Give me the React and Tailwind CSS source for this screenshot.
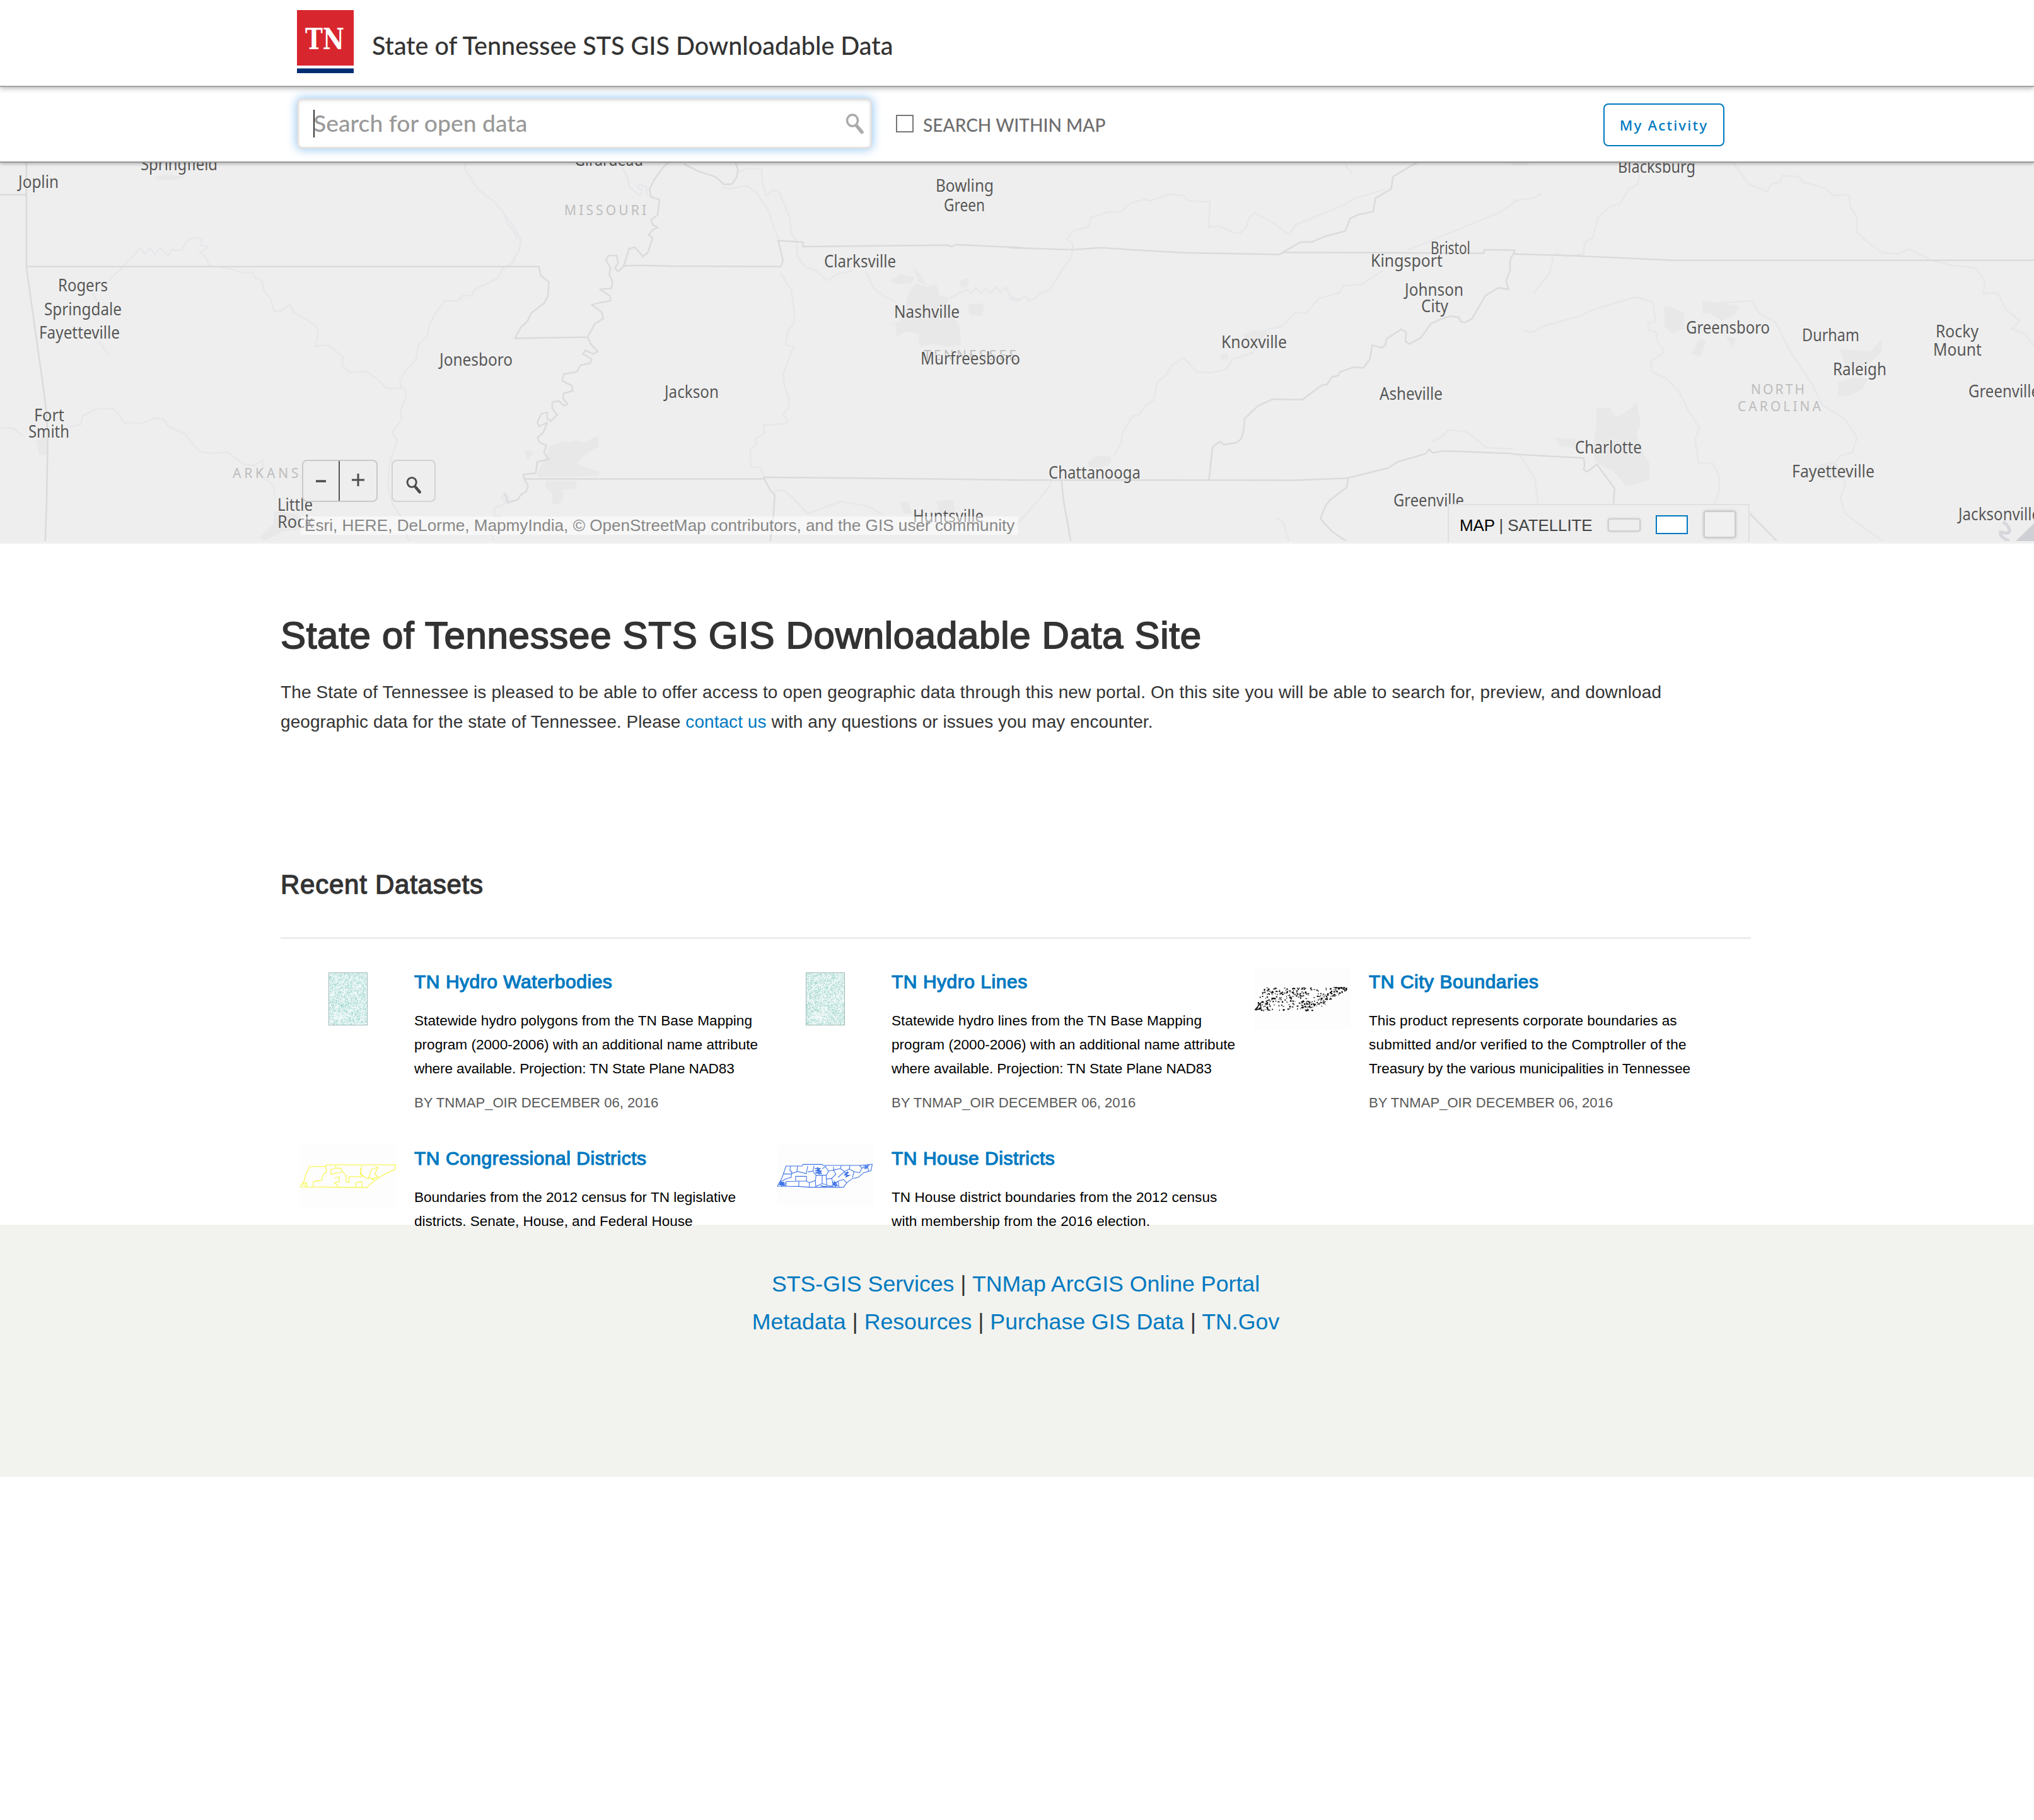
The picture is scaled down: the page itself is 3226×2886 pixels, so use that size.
import React from "react";

// Each tile keeps its own drawing grid; sx scales it to page pixels.
const TILES = [
  {
    x: 0,
    sx: 0.523,
    borders:
      "M80 42L80 455M0 171L80 171M80 455L1568 455M80 455L105 690L128 900L140 1020L145 1130L141 1400L137 1540",
    rivers:
      "M1412 42L1410 72L1450 150L1500 200L1530 250L1540 290L1560 315L1568 350M1568 400L1555 440L1525 460L1510 500L1440 545L1430 570L1405 568L1388 592L1350 588L1320 640L1300 690L1295 730L1268 765L1262 820L1225 875L1212 905L1218 933M370 460L405 412L425 380L440 405L455 380L470 408L485 382L510 410L522 388L548 390L575 345L600 340L612 350L608 370L632 378L605 400L622 415L635 450L700 465L740 480L765 475L775 500L795 510L800 550L820 580L830 630L850 630L880 605L890 635L930 665L960 690L965 720L955 768L995 765L1040 810L1038 845L1060 873L1110 868L1140 895L1172 935L1228 935L1232 970L1215 1020L1218 1060L1188 1110L1205 1140L1195 1180L1185 1215L1175 1310L1190 1390L1220 1450L1240 1540M370 460L330 510M280 560L300 600L285 660M300 750L330 805M0 1092L40 1092L70 1125M210 1088L245 1078L250 1045L290 1018L340 1014L360 1035L375 1070L430 1073L470 1052L495 1058L510 1085L560 1115L605 1185L640 1192L690 1187L740 1235L770 1240L795 1220L800 1245L785 1275L830 1320L835 1370M1568 1375L1540 1390L1520 1370L1530 1350L1545 1370L1520 1400L1500 1405L1500 1440L1520 1440L1490 1500L1497 1535",
    urban:
      "M110 1140L145 1120L145 1195L120 1200ZM830 1420L900 1430L920 1490L860 1500L800 1537L790 1520L830 1470ZM470 100l40 -10l50 10l-20 12l-60 0z",
  },
  {
    x: 800,
    sx: 0.523,
    borders:
      "M0 455L105 455L110 490L135 515L132 570L120 600L80 640L70 670L50 695L32 738L252 733L275 680L300 660L295 635L265 605L290 597L322 590L320 570L290 545L325 540L328 515L318 485L322 460L308 430L315 412L340 410L345 440L335 460L345 475L362 452L378 385L395 378L420 415L435 400L450 340L437 330L450 310L465 300L450 290L445 270L465 250L470 190L445 180L440 150L455 110L480 65L500 42M545 50L590 80L640 100L665 130L690 130L705 100L708 70L700 42M362 452L420 450L500 453L838 455L845 430L830 352L905 358L905 376L1345 370L1355 376L1370 368L1568 380M252 733L262 760L283 790L270 800L245 785L238 800L265 820L260 835L230 845L220 870L180 880L175 905L205 925L207 945L180 955L178 975L192 998L180 1003L165 985L145 990L145 1015L160 1040L140 1065L130 1055L130 1030L112 1035L100 1070L105 1085L130 1070L118 1110L100 1130L108 1150L128 1160L120 1190L135 1215L100 1225L95 1270L58 1275L60 1293L785 1293M785 1286L1568 1297M785 1286L805 1335L820 1355L815 1450L806 1540M60 1293L72 1320L65 1345L50 1355L40 1375L10 1385L0 1350",
    rivers:
      "M350 42L372 100L378 140L412 175L418 155L405 145L408 130L430 140L432 170L455 185M708 85L730 68L780 70L782 120L795 175L815 150L835 165L865 260L870 320L885 355L890 420L915 460L940 465L978 510L1010 485L1055 472M1095 475L1120 540L1150 570L1185 595M660 140L680 148L735 135L765 165L800 230L815 290L830 345M838 480L870 550L880 640L878 680L860 705L853 765L878 770L865 810L845 880L850 930L865 985L862 1015L845 1040L858 1060L855 1075L785 1080L790 1110L762 1135L765 1155L745 1180L748 1245L775 1248L790 1286M820 1335L850 1340L880 1375L920 1430L1020 1382L1100 1400L1150 1435M1350 580L1400 545L1415 560L1430 540L1445 560L1460 540L1475 560L1490 535L1505 555L1520 535L1535 575L1568 588M0 250L30 300L50 350L45 390L22 440",
    urban:
      "M1250 520L1280 535L1310 525L1320 570L1350 580L1340 600L1380 690L1385 765L1340 770L1300 760L1260 770L1255 720L1220 710L1190 730L1185 680L1155 688L1200 670L1215 620L1225 560ZM1235 440L1250 470L1270 500L1280 530L1255 515ZM1170 510L1200 485L1245 495L1235 520L1190 525ZM1380 510L1410 500L1405 535L1385 540ZM1405 605L1455 600L1450 650L1410 645ZM100 1270L120 1220L140 1160L180 1145L200 1150L215 1140L240 1150L285 1120L285 1165L240 1200L220 1230L240 1245L290 1265L285 1280L200 1285L100 1285ZM125 1300L220 1300L215 1330L175 1335L180 1370L160 1395L145 1390L145 1350L125 1325ZM60 1180L90 1185L70 1220ZM1200 1385L1225 1380L1235 1430L1210 1430ZM1310 1380L1360 1375L1370 1430L1320 1440Z",
  },
  {
    x: 1600,
    sx: 0.523,
    borders:
      "M0 380L190 388L280 380L370 388L530 400L820 407L835 398L1440 402L1442 388L1535 390L1520 430L1520 470L1508 510L1515 545L1485 538L1445 570L1405 660L1385 675L1370 672L1365 655L1340 650L1310 662L1280 680L1250 735L1215 760L1203 750L1205 715L1190 702L1145 740L1142 765L1130 775L1102 765L1095 820L1075 855L1045 852L1005 870L1000 885L980 890L965 920L950 922L890 980L800 978L755 1005L715 1055L712 1100L705 1135L690 1150L652 1158L640 1145L618 1168L607 1295M820 407L885 358L918 358L960 335L1020 315L1035 265L1060 250L1105 238L1112 185L1160 148L1165 100L1240 42M0 1297L870 1298L1025 1290L1150 1250L1180 1225L1265 1193L1275 1175L1285 1190L1320 1182L1530 1193M1030 1290L1025 1325L975 1375L960 1400L945 1450L980 1500L1025 1540M160 1300L165 1370L188 1540M1532 402L1540 405",
    rivers:
      "M0 580L30 590L50 570L60 590L80 580L95 560L125 545L165 460L190 420L195 365L175 345L200 310L240 300L250 260L300 240L340 238L370 205L410 190L430 195L490 168L530 175L545 195L610 200L608 250L605 300L640 295L680 320L700 325L720 300L730 260L745 243L800 280L850 330L870 290L1010 215L1050 185L1140 150M1210 390L1330 325L1490 240L1540 195M320 1200L340 1150L345 1110L375 1045L395 1040L410 1010L440 980L450 910L480 880L490 850L530 815L570 870L610 875L660 860L680 820L740 795L780 705L830 690L870 635L900 640L940 580L1000 560L1015 530L1070 525L1135 470M130 1300L120 1330L60 1420L20 1480M810 1450L830 1458L850 1537M1280 1145L1310 1130L1335 1098L1390 1108L1450 1170L1530 1175M1020 50L1040 90",
    urban:
      "M710 725L740 705L790 715L760 745L720 750ZM640 800L665 795L665 820L645 825ZM240 1225L270 1200L310 1205L310 1230L280 1250L240 1245ZM1515 42L1530 56L1568 56L1590 42Z",
  },
  {
    x: 2400,
    sx: 0.5269,
    borders:
      "M0 405L180 412L480 430L1568 430M0 1195L212 1210L215 1240L212 1255L222 1265L252 1235L305 1330L302 1390M712 1428L795 1540",
    rivers:
      "M380 90L375 130L350 145L320 210L295 215L255 260L240 340L215 360L212 405L160 415L125 400M120 420L110 480L60 560M0 195L60 185L88 165M660 42L710 130L765 160L775 130L805 120L810 95L860 100L870 120L940 145L965 175L1010 170L1015 220L1035 260L1035 320L1060 350L1110 400L1160 405L1190 385L1260 430L1320 450L1390 460L1420 510L1415 560L1460 560L1480 620L1525 670L1500 700L1540 720L1568 768M30 705L55 715L90 690L200 650L240 625L330 590L370 575L420 595L425 640L430 670L405 680L408 705L430 715L435 750L455 790L415 830L418 870L460 895L500 950L530 1030L560 1090L548 1140L558 1230L600 1230L620 1280L620 1340L605 1390M610 600L720 590L740 640L790 675L830 780L900 920L930 1000L1000 1060L1035 1130L1020 1190L985 1200L970 1230L1000 1310L985 1370L1000 1430L1060 1490L1115 1540M20 1200L65 1290L75 1390",
    urban:
      "M455 610L480 615L515 640L515 700L480 720L455 690ZM570 590L625 600L680 610L670 640L630 670L590 640L570 640ZM560 740L580 745L565 810L535 800ZM640 730L670 740L660 775ZM250 1015L290 1010L310 1050L350 1020L370 990L385 1080L370 1110L390 1190L410 1230L410 1300L340 1320L300 1260L250 1230L240 1190L250 1080ZM125 1130L190 1135L185 1170L140 1165ZM985 780L1030 785L1075 790L1110 740L1110 790L1070 840L1000 850ZM1030 890L1070 900L1050 940L1000 970L975 960L980 910ZM910 1240L970 1220L990 1290L930 1300ZM0 42L48 42L30 52L0 56Z",
  },
];

// [name, left, right, baseline]
const CITIES = [
  ["Springfield", 223, 345, 270],
  ["Joplin", 29, 93, 298],
  ["Rogers", 92, 171, 462],
  ["Springdale", 70, 193, 500],
  ["Fayetteville", 62, 190, 537],
  ["Jonesboro", 697, 813, 580],
  ["Fort", 54, 102, 668],
  ["Smith", 45, 110, 694],
  ["Little", 440, 496, 810],
  ["Rock", 440, 497, 837],
  ["Girardeau", 911, 1020, 263],
  ["Bowling", 1484, 1576, 304],
  ["Green", 1497, 1562, 334.5],
  ["Clarksville", 1307, 1421, 424],
  ["Nashville", 1418, 1522, 504],
  ["Murfreesboro", 1460, 1618, 578],
  ["Jackson", 1054, 1140, 631],
  ["Huntsville", 1448, 1560, 828],
  ["Kingsport", 2174, 2288, 423],
  ["Bristol", 2269, 2332, 403],
  ["Johnson", 2228, 2321, 468.5],
  ["City", 2254, 2297, 495],
  ["Knoxville", 1937, 2041, 552],
  ["Asheville", 2188, 2288, 634],
  ["Chattanooga", 1663, 1809, 758.5],
  ["Greenville", 2210, 2322, 802.5],
  ["Blacksburg", 2566, 2689, 274],
  ["Greensboro", 2674, 2807, 529],
  ["Durham", 2858, 2949, 541],
  ["Rocky", 3070, 3138, 535],
  ["Mount", 3066, 3143, 564],
  ["Raleigh", 2907, 2992, 595],
  ["Greenville", 3122, 3235, 630],
  ["Charlotte", 2498, 2604, 718.5],
  ["Fayetteville", 2842, 2973, 757],
  ["Jacksonville", 3106, 3236, 825],
];

const STATES = [
  ["ARKANSAS", 369, 508, 758],
  ["MISSOURI", 895, 1025, 340.5],
  ["TENNESSEE", 1465, 1612, 571],
  ["NORTH", 2777, 2862, 625],
  ["CAROLINA", 2756, 2888, 652],
];

function MapCanvas() {
  return (
    <svg viewBox="0 258 3226 600" className="block h-[600px] w-full bg-[#eeeeee]">
      {TILES.map((t) => (
        <g key={t.x} transform={`translate(${t.x} 240) scale(${t.sx} 0.4018)`} fill="none" strokeLinejoin="round">
          <path d={t.urban} fill="#e8e8e8" />
          <path d={t.rivers} stroke="#e6e7ea" strokeWidth="2.5" vectorEffect="non-scaling-stroke" />
          <path d={t.borders} stroke="#dbdbdb" strokeWidth="2.5" vectorEffect="non-scaling-stroke" />
        </g>
      ))}
      <path d="M3226 830L3197 858L3226 858Z" fill="#cfcfd6" />
      <path d="M3177 828q8 4 10 12t-14 4q-2 8 14 14" fill="none" stroke="#d6d6dc" strokeWidth="5" />
      {STATES.map(([name, l, r, b]) => (
        <text key={name} x={l} y={b} textLength={r - l} className="fill-[#bdbdbd] font-['Noto_Sans',sans-serif] text-[21px]">
          {name}
        </text>
      ))}
      {CITIES.map(([name, l, r, b]) => (
        <text
          key={name + l}
          x={l}
          y={b}
          textLength={r - l}
          lengthAdjust="spacingAndGlyphs"
          paintOrder="stroke"
          stroke="#f2f2f2"
          strokeWidth="2"
          className="fill-[#575757] font-['Noto_Sans',sans-serif] text-[27px]"
        >
          {name}
        </text>
      ))}
    </svg>
  );
}

function Magnifier({ className }) {
  return (
    <svg viewBox="0 0 30 32" className={className} fill="none" stroke="currentColor" strokeLinecap="round">
      <ellipse cx="11" cy="11" rx="8.5" ry="9" strokeWidth="3.5" />
      <path d="M18.5 20.5L26 29.5" strokeWidth="5.5" />
    </svg>
  );
}

function Logo() {
  return (
    <svg viewBox="0 0 90 100" className="mt-4 h-[100px] w-[90px]">
      <rect width="90" height="88" fill="#d8262e" />
      <rect y="92.5" width="90" height="7.5" fill="#002d72" />
      <text x="13" y="62" textLength="62" lengthAdjust="spacingAndGlyphs" fill="#fff" className="font-['DejaVu_Serif',serif] text-[47px] font-bold">
        TN
      </text>
    </svg>
  );
}

function makeRandom(seed) {
  let s = seed;
  return () => {
    s = (s * 16807) % 2147483647;
    return s / 2147483647;
  };
}

function hydroPath(seed, count) {
  const rnd = makeRandom(seed);
  let d = "";
  for (let i = 0; i < count; i++) {
    const x = rnd() * 60;
    const y = rnd() * 82;
    if (x > 8 && x < 26 && y > 62 && y < 73 && rnd() < 0.7) continue;
    d += `M${x.toFixed(1)} ${y.toFixed(1)}l${(rnd() * 3 - 1.5).toFixed(1)} ${(rnd() * 3 - 1.5).toFixed(1)}`;
  }
  return d;
}

function cityDots() {
  const rnd = makeRandom(77);
  const clusters = [[0.42, 0.25], [0.78, 0.5], [0.92, 0.15], [0.58, 0.85], [0.2, 0.4], [0.08, 0.85]];
  let d = "";
  for (let i = 0; i < 400; i++) {
    let u = rnd();
    let v = rnd();
    if (rnd() < 0.45) {
      const c = clusters[Math.floor(rnd() * clusters.length)];
      u = c[0] + (rnd() - 0.5) * 0.16;
      v = Math.min(1, Math.max(0, c[1] + (rnd() - 0.5) * 0.5));
    }
    const left = 0.1 * (1 - v);
    const right = v < 0.15 ? 0.98 : 1.02 - 0.36 * v;
    if (u < left || u > right) continue;
    const w = 0.9 + rnd() * 2;
    const h = 0.9 + rnd() * 1.8;
    d += `M${(u * 149).toFixed(1)} ${(30 + v * 36).toFixed(1)}h${w.toFixed(1)}v${h.toFixed(1)}h-${w.toFixed(1)}z`;
  }
  return d;
}

const HYDRO_A = hydroPath(11, 1700);
const HYDRO_B = hydroPath(29, 1700);
const CITY_DOTS = cityDots();

function HydroThumb({ d, color }) {
  return (
    <svg viewBox="0 0 62 84" className="mx-auto mt-[5px] h-[84px] w-[62px] bg-[#eef8f7]">
      <path d={d} transform="translate(1 1)" stroke={color} strokeWidth="0.8" fill="none" />
      <rect x="0.5" y="0.5" width="61" height="83" fill="none" stroke="#9fb9b7" strokeWidth="1" />
    </svg>
  );
}

function CongressThumb() {
  return (
    <svg viewBox="86 1190 302 255" preserveAspectRatio="none" className="-mt-px h-[98px] w-[154px] bg-[#fdfdfd]">
      <path
        d="M88 1362L100 1340L105 1310L118 1278L168 1277L170 1271L385 1271L383 1290L350 1310L320 1335L295 1365L190 1363ZM168 1277L170 1300L160 1310L155 1335L130 1340L128 1362M200 1272L198 1285L182 1290L185 1310L200 1305L220 1300L215 1285L200 1285M220 1300L232 1315L230 1340L240 1345L240 1320L280 1320L275 1285M195 1325L210 1320L210 1340L195 1345L208 1360M280 1275L275 1310L300 1330L310 1290L330 1280L320 1310L330 1320L310 1330M260 1362L262 1345L280 1340L280 1362M300 1320L320 1335M92 1350L108 1345L108 1360L98 1352"
        fill="none"
        stroke="#f7f75a"
        strokeWidth="1.3"
        vectorEffect="non-scaling-stroke"
      />
    </svg>
  );
}

function HouseThumb() {
  return (
    <svg viewBox="63 1004 304 294" preserveAspectRatio="none" className="-mt-0.5 h-[98px] w-[154px] bg-[#fdfdfd]">
      <g fill="none" stroke="#3f74e8" strokeWidth="1.1">
        <path
          vectorEffect="non-scaling-stroke"
          d="M65 1202L80 1160L92 1106L142 1106L145 1098L205 1098L207 1103L322 1103L362 1097L358 1128L335 1138L318 1160L300 1165L282 1186L272 1207L165 1207L130 1203ZM84 1144L105 1144L128 1132L155 1142L160 1106M106 1106L104 1128L110 1132L108 1160L95 1165M128 1106L126 1132M122 1155L156 1155L156 1178L122 1178ZM92 1203L92 1180L122 1178M132 1203L132 1178M156 1178L165 1185L165 1207M180 1104L176 1130L160 1134M176 1130L186 1150L184 1175L165 1185M186 1150L205 1150L205 1190L185 1203L184 1175M205 1120L215 1108L225 1130L218 1150L205 1150M225 1130L240 1125L248 1145L235 1165L218 1168L218 1150M218 1168L220 1195L205 1190M235 1165L240 1195L255 1178L272 1170L282 1186M255 1178L258 1207M240 1110L242 1125L262 1118L275 1132L255 1160M262 1118L265 1104M275 1132L290 1120L292 1104M290 1120L305 1132L300 1160M305 1132L322 1138L330 1115L322 1103M330 1115L348 1112L350 1130M340 1103L345 1120M95 1165L74 1180L92 1190"
        />
        <path
          vectorEffect="non-scaling-stroke"
          strokeWidth="1.6"
          d="M182 1118L200 1118L186 1128L204 1130L184 1138L202 1142L190 1112L196 1146M274 1140L288 1136L276 1148L290 1150L280 1158L284 1132M70 1186L86 1184L70 1194L88 1196L76 1182L78 1200L84 1182L84 1202M236 1186L250 1184L238 1196L252 1198L244 1182L246 1206M334 1108L350 1104L338 1120M200 1200L214 1204L224 1200L240 1204"
        />
      </g>
    </svg>
  );
}

function CityThumb() {
  return (
    <svg viewBox="0 0 154 98" className="-mt-0.5 h-[98px] w-[154px] bg-[#fdfdfd]">
      <path d={CITY_DOTS} fill="#111" />
      <path d="M2 66l8 -10l1 9z" fill="none" stroke="#111" strokeWidth="1.5" />
    </svg>
  );
}

const BYLINE = "BY TNMAP_OIR DECEMBER 06, 2016";

const DATASETS = [
  {
    title: "TN Hydro Waterbodies",
    lines: [
      ["Statewide hydro polygons from the TN Base Mapping", "tracking-[0.03px]"],
      ["program (2000-2006) with an additional name attribute", ""],
      ["where available. Projection: TN State Plane NAD83", "tracking-[-0.14px]"],
    ],
    by: BYLINE,
    thumb: <HydroThumb d={HYDRO_A} color="#86cbc5" />,
  },
  {
    title: "TN Hydro Lines",
    lines: [
      ["Statewide hydro lines from the TN Base Mapping", "tracking-[0.03px]"],
      ["program (2000-2006) with an additional name attribute", ""],
      ["where available. Projection: TN State Plane NAD83", "tracking-[-0.14px]"],
    ],
    by: BYLINE,
    thumb: <HydroThumb d={HYDRO_B} color="#89cbbb" />,
  },
  {
    title: "TN City Boundaries",
    lines: [
      ["This product represents corporate boundaries as", "tracking-[0.03px]"],
      ["submitted and/or verified to the Comptroller of the", "tracking-[0.15px]"],
      ["Treasury by the various municipalities in Tennessee", "tracking-[-0.12px]"],
    ],
    by: BYLINE,
    thumb: <CityThumb />,
  },
  {
    title: "TN Congressional Districts",
    lines: [
      ["Boundaries from the 2012 census for TN legislative", "tracking-[-0.04px]"],
      ["districts. Senate, House, and Federal House", "tracking-[-0.04px]"],
    ],
    thumb: <CongressThumb />,
  },
  {
    title: "TN House Districts",
    lines: [
      ["TN House district boundaries from the 2012 census", "tracking-[0.03px]"],
      ["with membership from the 2016 election.", "tracking-[0.08px]"],
    ],
    thumb: <HouseThumb />,
  },
];

function Dataset({ title, lines, by, thumb }) {
  return (
    <article className="flex h-[280px] items-start pl-[30px]">
      <div className="mr-7 w-[154px] shrink-0">{thumb}</div>
      <div className="whitespace-nowrap">
        <h3 className="text-[30px] leading-10 tracking-[0.52px] text-[#0079c1] [-webkit-text-stroke:1.2px_#0079c1]">{title}</h3>
        <p className="mt-[22.5px] text-[22.6px] leading-[38px] text-black">
          {lines.map(([text, tracking]) => (
            <span key={text} className={`block ${tracking}`}>
              {text}
            </span>
          ))}
        </p>
        {by && <p className="mt-[15px] text-[22.1px] leading-10 text-[#595959]">{by}</p>}
      </div>
    </article>
  );
}

function FooterLinks({ links }) {
  return (
    <div>
      {links.map((l, i) => (
        <React.Fragment key={l}>
          {i > 0 && " | "}
          <a className="text-[#0079c1]">{l}</a>
        </React.Fragment>
      ))}
    </div>
  );
}

export default function App() {
  return (
    <div className="min-h-[2886px] w-[3226px] overflow-hidden bg-white font-['Liberation_Sans',Arial,sans-serif] text-[#333]">
      <header className="relative z-20 flex h-[138px] items-start border-b-2 border-[#a3a3a3] bg-white pl-[471px] shadow-[0_2px_8px_rgba(0,0,0,0.3)]">
        <Logo />
        <span className="mt-[52px] ml-[29px] whitespace-nowrap font-['Lato',sans-serif] text-[39.5px] leading-10 font-medium text-[#333]">
          State of Tennessee STS GIS Downloadable Data
        </span>
      </header>

      <div className="relative z-10 flex h-[120px] items-start border-b-2 border-[#999] bg-white pr-[491px] pl-[471px] font-['Lato',sans-serif] shadow-[0_2px_5px_rgba(0,0,0,0.25)]">
        <div className="mt-[18px] flex h-20 w-[912px] items-center rounded-lg border-[3px] border-[#e3e0e2] bg-white pr-[9px] pl-[23px] shadow-[0_0_15px_1px_rgba(120,185,240,0.8),inset_0_2px_5px_rgba(0,0,0,0.08)]">
          <span className="h-[44px] w-0.5 bg-[#333]" />
          <span className="-ml-0.5 pb-[3px] text-[37.3px] leading-10 font-medium text-[#999]">Search for open data</span>
          <Magnifier className="ml-auto h-8 w-[30px] text-[#aaa]" />
        </div>
        <span className="mt-11 ml-[38px] size-7 border-2 border-[#777] bg-white" />
        <span className="mt-[46px] ml-[15px] text-[28.1px] leading-7 font-medium whitespace-nowrap text-[#6e6e6e]">SEARCH WITHIN MAP</span>
        <button className="mt-[26px] ml-auto h-[68px] w-[192px] rounded-lg border-2 border-[#0079c1] bg-white pt-0.5 font-['Noto_Sans',sans-serif] text-[22.5px] font-medium tracking-[2.1px] text-[#0079c1]">
          My Activity
        </button>
      </div>

      <section className="relative h-[604px] border-b-4 border-[#f0f0f0]">
        <MapCanvas />
        <div className="absolute top-[471px] left-[479px] flex h-[67px] w-[120px] rounded-lg border-2 border-[#c9c9c9] bg-[#eeeeee] text-[#4c4c4c]">
          <span className="flex w-[58px] items-center justify-center border-r-2 border-[#555]">
            <svg viewBox="0 0 24 24" className="size-6">
              <path d="M4 12h16" stroke="currentColor" strokeWidth="3.5" />
            </svg>
          </span>
          <span className="flex flex-1 items-center justify-center">
            <svg viewBox="0 0 24 24" className="size-6 -translate-y-0.5">
              <path d="M2 12h20M12 2v20" stroke="currentColor" strokeWidth="3" />
            </svg>
          </span>
        </div>
        <div className="absolute top-[471px] left-[621px] flex h-[67px] w-[70px] items-center justify-center rounded-lg border-2 border-[#d2d2d2] bg-[#eeeeee] pt-3 text-[#4c4c4c]">
          <Magnifier className="h-7 w-[25px]" />
        </div>
        <div className="absolute top-[561px] left-[477px] h-[29px] w-[1138px] bg-white/50 pl-1.5 text-[26.15px] leading-7 whitespace-nowrap text-[#888]">
          Esri, HERE, DeLorme, MapmyIndia, © OpenStreetMap contributors, and the GIS user community
        </div>
        <div className="absolute top-[541px] left-[2296px] flex h-[61px] w-[479px] items-center border-2 border-b-0 border-[#e0e0e0] bg-[#eeeeee] pl-[17px] text-[26px] leading-8 text-[#444]">
          <span className="pt-1 tracking-[-0.13px] whitespace-nowrap">
            <span className="text-black">MAP</span> | SATELLITE
          </span>
          <span className="mt-1 ml-[25px] h-[21px] w-[52px] rounded-sm border-2 border-[#d0d0d0] shadow-[0_0_3px_rgba(0,0,0,0.2)]" />
          <span className="mt-0.5 ml-[24px] h-[30px] w-[51px] border-2 border-[#0079c1] bg-white" />
          <span className="mt-0.5 ml-[25px] h-[43px] w-[51px] rounded-sm border-2 border-[#cccccc] bg-[#f0f0f0] shadow-[0_0_4px_rgba(0,0,0,0.22)]" />
        </div>
      </section>

      <main className="relative z-10 ml-[445px] h-[1080px] w-[2332px] pt-[110px]">
        <h1 className="text-[60px] leading-[72px] tracking-[0.7px] whitespace-nowrap [-webkit-text-stroke:1.8px_#333]">
          State of Tennessee STS GIS Downloadable Data Site
        </h1>
        <p className="mt-[31px] text-[28px] leading-[46.5px] tracking-[0.13px] whitespace-nowrap text-[#333]">
          The State of Tennessee is pleased to be able to offer access to open geographic data through this new portal. On this site you will be able to search for, preview, and download
          <br />
          <span className="tracking-[0.06px]">
            geographic data for the state of Tennessee. Please <a className="text-[#0079c1]">contact us</a> with any questions or issues you may encounter.
          </span>
        </p>
        <h2 className="mt-[210px] text-[42px] leading-[50px] tracking-[0.75px] [-webkit-text-stroke:1.3px_#333]">Recent Datasets</h2>
        <hr className="mt-[58px] h-[3px] border-0 bg-[#ececec]" />
        <div className="mt-12 grid grid-cols-[757px_757px_757px]">
          {DATASETS.map((d) => (
            <Dataset key={d.title} {...d} />
          ))}
        </div>
      </main>

      <footer className="h-[400px] bg-[#f2f2ee] pt-[64px] pr-1 text-center text-[35.7px] leading-[60px] text-[#333]">
        <FooterLinks links={["STS-GIS Services", "TNMap ArcGIS Online Portal"]} />
        <FooterLinks links={["Metadata", "Resources", "Purchase GIS Data", "TN.Gov"]} />
      </footer>
    </div>
  );
}
